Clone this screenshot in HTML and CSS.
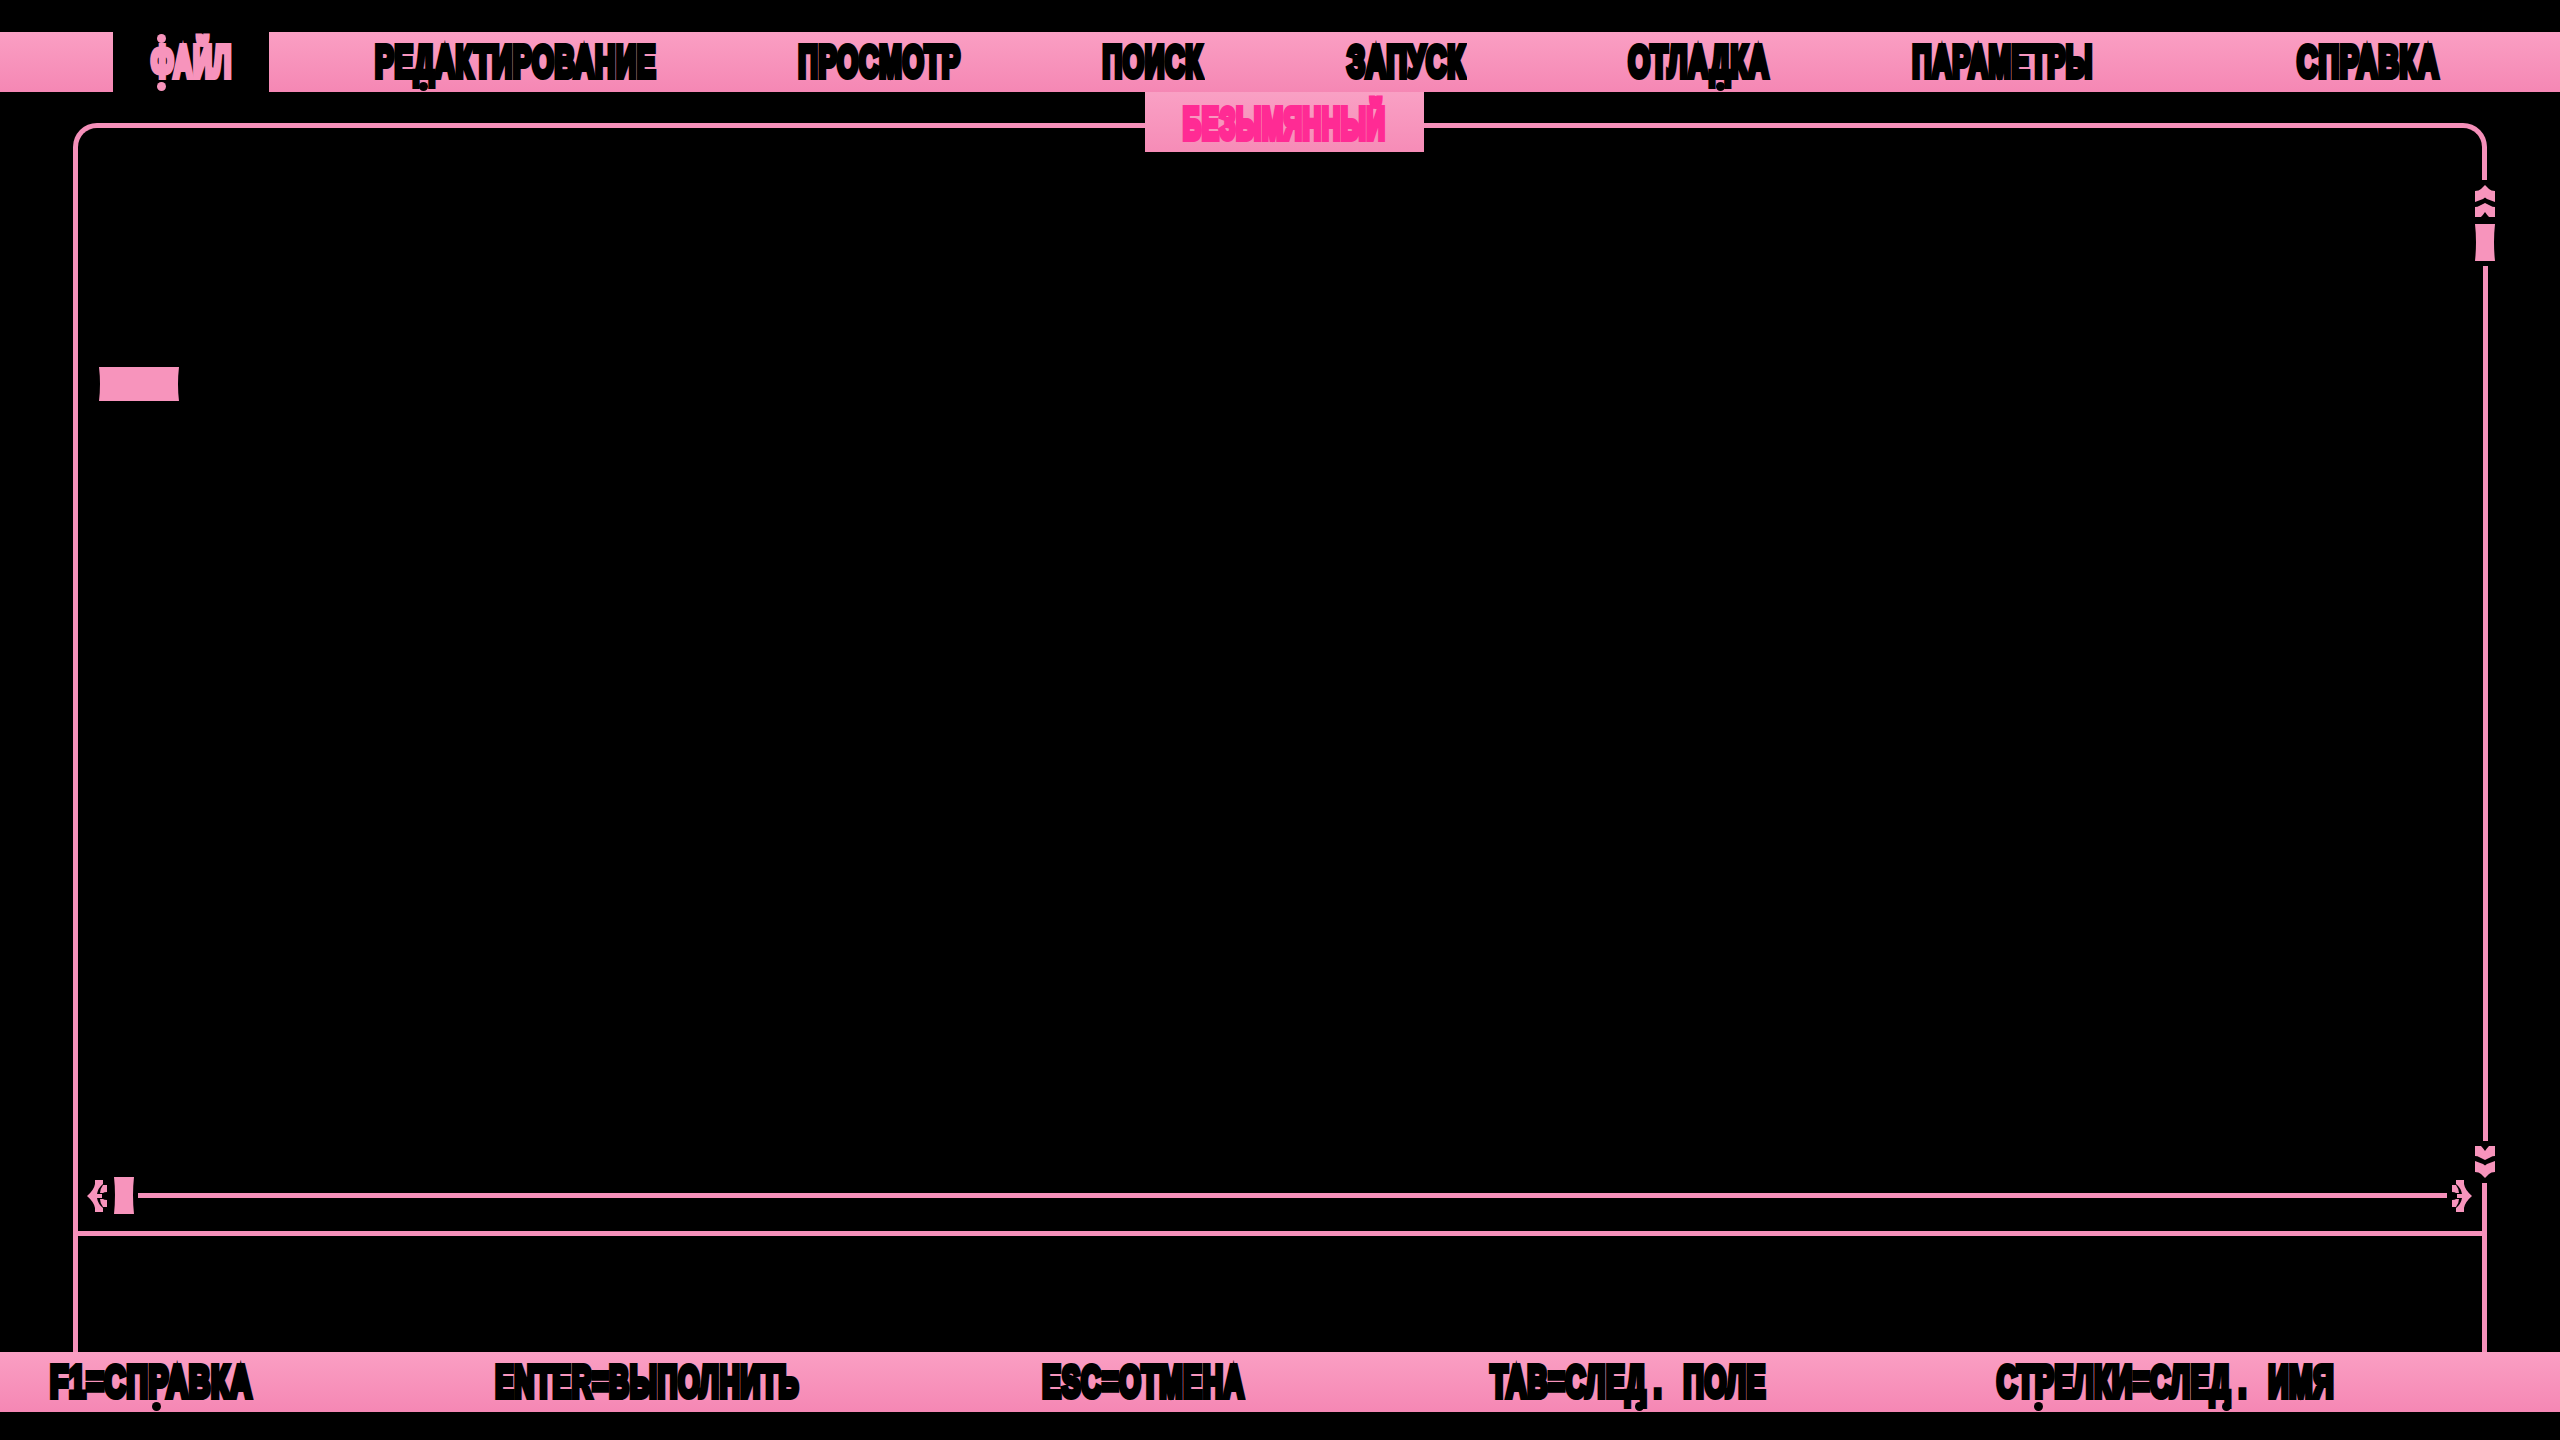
FILE: index.html
```html
<!DOCTYPE html>
<html lang="ru">
<head>
  <meta charset="UTF-8" />
  <title>Безымянный</title>
  <link rel="stylesheet" href="styles.css">
</head>
<body>

  <nav class="menu">
    <div class="menu-pad"></div>
    <div class="item item-file">
      <span class="label">ФАЙЛ</span>
      <i class="dot dot-file-a"></i>
      <i class="dot dot-file-b"></i>
      <i class="dot dot-file-c"></i>
    </div>
    <div class="item item-edit"><span class="label">РЕДАКТИРОВАНИЕ</span><i class="dot dot-edit"></i></div>
    <div class="item item-view"><span class="label">ПРОСМОТР</span></div>
    <div class="item item-search"><span class="label">ПОИСК</span></div>
    <div class="item item-run"><span class="label">ЗАПУСК</span></div>
    <div class="item item-debug"><span class="label">ОТЛАДКА</span><i class="dot dot-debug"></i></div>
    <div class="item item-params"><span class="label">ПАРАМЕТРЫ</span></div>
    <div class="item item-help"><span class="label">СПРАВКА</span></div>
  </nav>

  <main class="window">
    <div class="title">
      <span class="label">БЕЗЫМЯННЫЙ</span>
      <i class="dot dot-title"></i>
    </div>

    <div class="vscroll">
      <svg class="arrow-v" viewBox="0 0 20 32"><path d="M10 0L14 4Q16 6 20 6V17L12 14 10 12.5 8 14 0 17V6Q4 6 6 4Z"/><path d="M10 18L16 21Q17 22 20 22V32H14Q12 30 10 27 8 30 6 32H0V22Q3 22 4 21Z"/></svg>
      <svg class="thumb" viewBox="0 0 20 37"><path d="M0 0H20Q18 18 20 37H0Q2 18 0 0Z"/></svg>
      <div class="vtrack"></div>
      <svg class="arrow-v flip-y" viewBox="0 0 20 32"><path d="M10 0L14 4Q16 6 20 6V17L12 14 10 12.5 8 14 0 17V6Q4 6 6 4Z"/><path d="M10 18L16 21Q17 22 20 22V32H14Q12 30 10 27 8 30 6 32H0V22Q3 22 4 21Z"/></svg>
    </div>

    <div class="editor">
      <svg class="cursor" viewBox="0 0 80 34"><path d="M0 0H80Q78 17 80 34H0Q2 17 0 0Z"/></svg>
    </div>

    <div class="hscroll">
      <svg class="arrow-h flip-x" viewBox="0 0 20 32"><path d="M4 0H12V4Q13 10 20 16 13 22 12 28V32H4V28Q9 24 10 18H5V14H10Q9 8 4 4Z"/><path d="M0 5H4Q7 9 7 13H4Q3 12 0 12Z"/><path d="M0 27H4Q7 23 7 19H4Q3 20 0 20Z"/></svg>
      <svg class="thumb thumb-h" viewBox="0 0 20 37"><path d="M0 0H20Q18 18 20 37H0Q2 18 0 0Z"/></svg>
      <div class="htrack"></div>
      <svg class="arrow-h" viewBox="0 0 20 32"><path d="M4 0H12V4Q13 10 20 16 13 22 12 28V32H4V28Q9 24 10 18H5V14H10Q9 8 4 4Z"/><path d="M0 5H4Q7 9 7 13H4Q3 12 0 12Z"/><path d="M0 27H4Q7 23 7 19H4Q3 20 0 20Z"/></svg>
    </div>

    <div class="divider"></div>
    <div class="message"></div>
  </main>

  <footer class="status">
    <div class="item key-help"><span class="label">F1=СПРАВКА</span><i class="dot dot-key-help"></i></div>
    <div class="item key-enter"><span class="label">ENTER=ВЫПОЛНИТЬ</span></div>
    <div class="item key-esc"><span class="label">ESC=ОТМЕНА</span></div>
    <div class="item key-tab"><span class="label">TAB=СЛЕД<span class="period">.</span> ПОЛЕ</span><i class="dot dot-key-tab"></i></div>
    <div class="item key-arrows">
      <span class="label">СТРЕЛКИ=СЛЕД<span class="period">.</span> ИМЯ</span>
      <i class="dot dot-key-arrows-a"></i>
      <i class="dot dot-key-arrows-b"></i>
    </div>
  </footer>

</body>
</html>
```

FILE: styles.css
```css
* {
  box-sizing: border-box;
}

body {
  margin: 0;
  padding-top: 32px;
  width: 2560px;
  height: 1440px;
  overflow: hidden;
  background: #000;
  color: #000;
  font-family: "Liberation Sans", Arial, sans-serif;
}

.menu, .status {
  display: flex;
  height: 60px;
  background: linear-gradient(to bottom, #fa9fc3, #f587b4);
}

.menu-pad {
  width: 113px;
}

.item {
  position: relative;
  display: flex;
  justify-content: center;
  align-items: center;
  height: 60px;
  flex: none;
}

/* шрифт очень узкий и жирный: сжимаем обычный и добавляем обводку */
.label {
  flex: none;
  white-space: nowrap;
  font-size: 44px;
  font-weight: 700;
  letter-spacing: 1px;
  line-height: 1;
  -webkit-text-stroke: 6px currentColor;
  transform: scaleX(var(--sx, 0.64));
}

.period {
  margin: 0 0 0 12px;
}

.dot {
  position: absolute;
  top: 50px;
  width: 9px;
  height: 9px;
  border-radius: 50%;
  background: currentColor;
}

/* меню */
.item-file {
  width: 156px;
  background: #000;
  color: #f794bc;
  --sx: 0.6;
}
.item-edit { width: 283px; margin-left: 105px; --sx: 0.64; }
.item-view { width: 162px; margin-left: 141px; --sx: 0.622; }
.item-search { width: 100px; margin-left: 143px; --sx: 0.622; }
.item-run { width: 122px; margin-left: 142px; --sx: 0.647; }
.item-debug { width: 142px; margin-left: 161px; --sx: 0.637; }
.item-params { width: 181px; margin-left: 142px; --sx: 0.612; }
.item-help { width: 144px; margin-left: 203px; --sx: 0.651; }

.dot-file-a { left: 44px; top: 2px; }
.dot-file-b { left: 84px; top: 2px; }
.dot-file-c { left: 44px; }
.dot-edit { left: 45px; }
.dot-debug { left: 88px; }

/* окно */
.window {
  position: relative;
  display: flex;
  flex-direction: column;
  width: 2414px;
  height: 1229px;
  margin: 31px 0 0 73px;
  border: 5px solid #f590ba;
  border-bottom: none;
  border-radius: 24px 24px 0 0;
}

.title {
  position: absolute;
  top: -36px;
  left: 1067px;
  display: flex;
  justify-content: center;
  align-items: center;
  width: 279px;
  height: 60px;
  padding-top: 4px;
  background: linear-gradient(to bottom, #f9a0c4, #f68cb7);
  color: #ff2b94;
  --sx: 0.582;
}

.dot-title {
  left: 226px;
  top: 4px;
}

.editor {
  flex: 1;
  padding: 239px 0 0 21px;
}

.cursor {
  display: block;
  width: 80px;
  height: 34px;
}

svg {
  fill: #f794bc;
}

.vscroll {
  position: absolute;
  top: 52px;
  right: -13px;
  display: flex;
  flex-direction: column;
  align-items: center;
  width: 20px;
  height: 1003px;
  padding: 5px 0;
  background: #000;
}

.arrow-v {
  flex: none;
  width: 20px;
  height: 32px;
}

.thumb {
  flex: none;
  width: 20px;
  height: 37px;
  margin: 7px 0 5px;
}

.vtrack {
  flex: 1;
  width: 5px;
  margin-bottom: 5px;
  background: #f590ba;
}

.flip-y {
  transform: scaleY(-1);
}

.flip-x {
  transform: scaleX(-1);
}

.hscroll {
  display: flex;
  align-items: center;
  height: 37px;
  margin-bottom: 17px;
  padding: 0 10px 0 9px;
}

.arrow-h {
  flex: none;
  width: 20px;
  height: 32px;
}

.thumb-h {
  margin: 0 4px 0 7px;
}

.htrack {
  flex: 1;
  height: 5px;
  margin-right: 5px;
  background: #f590ba;
}

.divider {
  height: 5px;
  background: #f590ba;
}

.message {
  height: 116px;
}

/* подсказки внизу */
.status {
  padding-left: 50px;
}

.key-help { width: 202px; --sx: 0.678; }
.key-enter { width: 304px; margin-left: 243px; --sx: 0.63; }
.key-esc { width: 202px; margin-left: 243px; --sx: 0.638; }
.key-tab { width: 283px; margin-left: 243px; --sx: 0.64; word-spacing: 20px; }
.key-arrows { width: 344px; margin-left: 223px; --sx: 0.64; word-spacing: 20px; }

.dot-key-help { left: 102px; }
.dot-key-tab { left: 148px; }
.dot-key-arrows-a { left: 41px; }
.dot-key-arrows-b { left: 229px; }
```
